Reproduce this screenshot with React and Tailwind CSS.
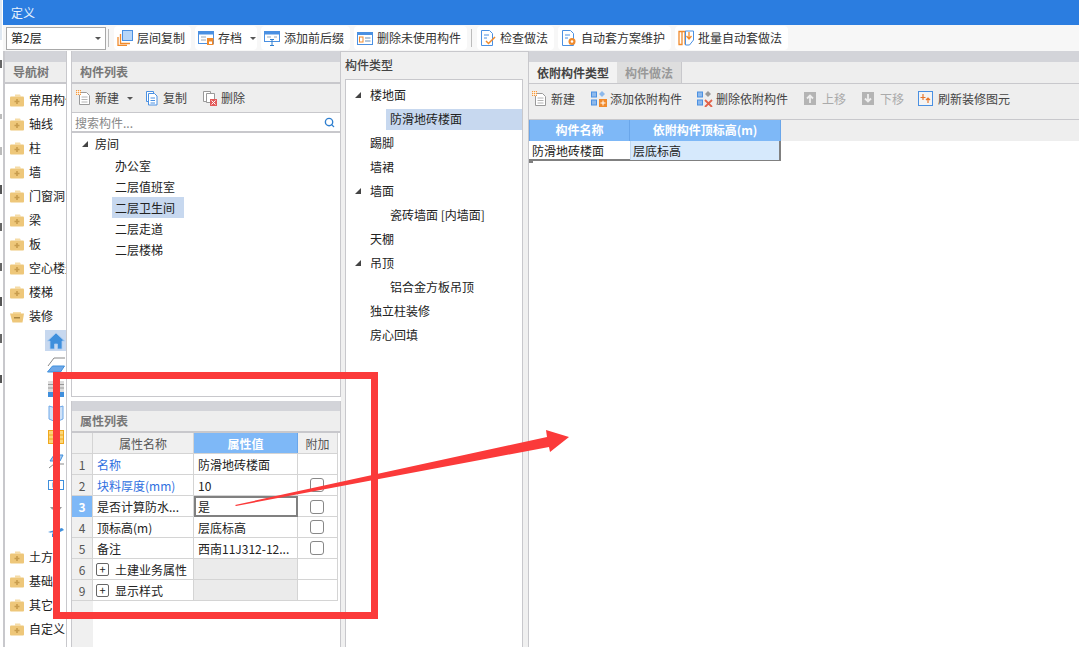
import { Search } from 'lucide-react';

const cjk = { fontFamily: '"Noto Sans CJK SC", "Liberation Sans", sans-serif' };

const Folder = ({ open }) => (
  <svg width="14" height="13" viewBox="0 0 14 13" className="shrink-0">
    {open ? (
      <>
        <path d="M3 2h8v2H3z" fill="#f6dca6" />
        <path d="M0 3.500h14l-1.500 9h-10z" fill="#eec77a" />
        <rect x="4" y="7" width="6" height="1.500" fill="#a88540" />
      </>
    ) : (
      <>
        <path d="M5 0.500h5l1 2H5z" fill="#f6dca6" />
        <rect y="2.500" width="14" height="10" rx="1" fill="#eec77a" />
        <path d="M7 5v5M4.500 7.500h5" stroke="#b98c3c" strokeWidth="1.700" opacity="0.7" />
      </>
    )}
  </svg>
);

const NewIcon = () => (
  <svg width="16" height="16" viewBox="0 0 16 16" className="shrink-0">
    <path d="M3.500 2.500h7l3 3v9h-10z" fill="#fff" stroke="#9a9a9a" />
    <path d="M5.500 7h6M5.500 9.500h6M5.500 12h6" stroke="#b4b4b4" />
    <path d="M0 0h5v5H0z" fill="#f59a3c" />
    <path d="M1.500 0v5M3.500 0v5M0 1.500h5M0 3.500h5" stroke="#fff" strokeWidth="0.700" />
  </svg>
);

const Caret = ({ className = '' }) => (
  <span className={`w-0 h-0 border-x-[3px] border-x-transparent border-t-[3px] border-t-[#555] ${className}`} />
);

const TB = ({ icon, label, caret }) => (
  <div className="flex items-center h-[24px] pl-[3px] pr-[6px] gap-[4px] rounded-sm bg-white text-[#333] whitespace-nowrap">
    {icon}
    <span>{label}</span>
    {caret && <Caret className="ml-[4px] -mr-[5px]" />}
  </div>
);

const Ico = ({ children }) => (
  <svg width="16" height="16" viewBox="0 0 16 16" className="shrink-0">
    {children}
  </svg>
);

const topTools = [
  { label: '层间复制', icon: <Ico><rect x="5.500" y="0.500" width="10" height="10" fill="#b7d6f8" stroke="#4a90e2" /><path d="M3.500 4v9.500H13M1 7v8.500h9" fill="none" stroke="#f08a2c" strokeWidth="1.300" /></Ico> },
  { label: '存档', caret: true, icon: <Ico><rect x="0.500" y="1.500" width="15" height="12" fill="#fff" stroke="#4a90e2" /><rect x="0.500" y="1.500" width="15" height="3" fill="#4a90e2" /><path d="M3 7h5M3 10h5" stroke="#9ab" /><rect x="9" y="8" width="6.500" height="7" fill="#f08a2c" /><rect x="11" y="11.500" width="3" height="2.500" fill="#fff" /></Ico> },
  { label: '添加前后缀', icon: <Ico><rect x="0.500" y="1.500" width="15" height="10" fill="#fff" stroke="#4a90e2" /><rect x="0.500" y="1.500" width="15" height="3" fill="#4a90e2" /><path d="M3 7h4M10 7h3" stroke="#9ab" /><path d="M6 9.500h4M8 9.500v6M6 15.500h4" stroke="#2f7fcf" fill="none" /></Ico> },
  { label: '删除未使用构件', icon: <Ico><rect x="0.500" y="2.500" width="15" height="12" fill="#fff" stroke="#4a90e2" /><rect x="0.500" y="2.500" width="15" height="2.500" fill="#4a90e2" /><rect x="2.500" y="7" width="3.500" height="5" fill="#fff" stroke="#f08a2c" /><path d="M8 8h5.500M8 11h5.500" stroke="#6b8fb5" /></Ico> },
];

const checkTools = [
  { label: '检查做法', icon: <Ico><path d="M1.500 0.500h8l3 3v12h-11z" fill="#fff" stroke="#4a90e2" /><path d="M4 5h5M4 8h3" stroke="#4a90e2" /><path d="M6 11l2.500 2.500L15 7" fill="none" stroke="#f08a2c" strokeWidth="1.500" /></Ico> },
  { label: '自动套方案维护', icon: <Ico><path d="M1.500 0.500h8l3 3v12h-11z" fill="#fff" stroke="#4a90e2" /><path d="M4 5h5M4 8h3" stroke="#4a90e2" /><circle cx="11" cy="11.500" r="3.500" fill="#f08a2c" /><circle cx="11" cy="11.500" r="1.300" fill="#fff" /></Ico> },
  { label: '批量自动套做法', icon: <Ico><path d="M1 1.500h3v13H1zM4 1.500h3v13" fill="#fff" stroke="#f08a2c" strokeWidth="1.300" /><path d="M7.500 1h8v9l-4 5h-4z" fill="#fff" stroke="#4a90e2" /><path d="M11 2v6M8.500 6l2.500 3 2.500-3" fill="none" stroke="#f08a2c" strokeWidth="1.300" /></Ico> },
];

const navTop = ['常用构件', '轴线', '柱', '墙', '门窗洞', '梁', '板', '空心楼盖', '楼梯'];
const navBottom = ['土方', '基础', '其它', '自定义'];

const subIcons = [
  <svg key="a" width="18" height="18" viewBox="0 0 18 18"><path d="M9 1L0.500 9H3v8h4.500v-5h3v5H15V9h2.500z" fill="#3f8fdc" stroke="#a9cbf2" strokeWidth="0.800" /></svg>,
  <svg key="b" width="18" height="18" viewBox="0 0 18 18"><path d="M1 10l6-8h11" fill="none" stroke="#888" /><path d="M0.500 16l5-6h12l-4 6z" fill="#6fa8e8" stroke="#3f8fdc" /></svg>,
  <svg key="c" width="18" height="18" viewBox="0 0 18 18"><rect x="1" y="1" width="16" height="11" fill="#ddd" /><path d="M1 4.500h16M1 8h16" stroke="#999" /><rect x="1" y="12" width="16" height="5" fill="#3f8fdc" /></svg>,
  <svg key="d" width="18" height="18" viewBox="0 0 18 18"><path d="M2 2l7 2 7-2v13l-7 3-7-3z" fill="#cfe2f8" stroke="#6fa8e8" /><path d="M9 4v13" stroke="#6fa8e8" /></svg>,
  <svg key="e" width="18" height="18" viewBox="0 0 18 18"><rect x="1.500" y="2.500" width="15" height="13" fill="#fbd77a" stroke="#f0a81e" /><path d="M1.500 7h15M1.500 11h15M9 2.500v13" stroke="#f0a81e" /></svg>,
  <svg key="f" width="18" height="18" viewBox="0 0 18 18"><path d="M2 16l5-4h10" fill="none" stroke="#888" /><path d="M3 9l4-6h9l-3 6z" fill="#a9cbf2" stroke="#3f8fdc" /></svg>,
  <svg key="g" width="18" height="18" viewBox="0 0 18 18"><rect x="1.500" y="4.500" width="15" height="9" fill="#fff" stroke="#3f8fdc" /><rect x="6" y="7" width="6" height="4" fill="#a9cbf2" stroke="#3f8fdc" /></svg>,
  <svg key="h" width="18" height="18" viewBox="0 0 18 18"><path d="M3 7h12l-2 2.500H5z" fill="#999" /><path d="M8 9h2v2H8z" fill="#bbb" /></svg>,
  <svg key="i" width="18" height="18" viewBox="0 0 18 18"><path d="M1 8l14-4 2 2-4 2v5H5V9z" fill="#3f8fdc" /><path d="M4 9h9" stroke="#fff" /></svg>,
];

const Tri = () => (
  <svg width="6" height="6" viewBox="0 0 6 6" className="shrink-0"><path d="M0 6L6 0v6z" fill="#444" /></svg>
);

const typeRows = [
  { label: '楼地面', tri: true },
  { label: '防滑地砖楼面', child: true, selected: true },
  { label: '踢脚' },
  { label: '墙裙' },
  { label: '墙面', tri: true },
  { label: '瓷砖墙面 [内墙面]', child: true },
  { label: '天棚' },
  { label: '吊顶', tri: true },
  { label: '铝合金方板吊顶', child: true },
  { label: '独立柱装修' },
  { label: '房心回填' },
];

const attrRows = [
  { n: 1, name: '名称', value: '防滑地砖楼面', blue: true },
  { n: 2, name: '块料厚度(mm)', value: '10', blue: true, check: true },
  { n: 3, name: '是否计算防水...', value: '是', check: true, active: true },
  { n: 4, name: '顶标高(m)', value: '层底标高', check: true },
  { n: 5, name: '备注', value: '西南11J312-12...', check: true },
  { n: 6, name: '土建业务属性', group: true },
  { n: 9, name: '显示样式', group: true },
];

// slivers of the window behind, seen along the left edge
const slivers = [
  { top: 0, h: 40, c: 'bg-[#dfe8f2]' },
  { top: 20, h: 8, c: 'bg-[#666]' },
  { top: 46, h: 5, c: 'bg-[#bbb]' },
  { top: 28, h: 8, c: 'bg-[#bbb]' },
  { top: 30, h: 9, c: 'bg-[#555]' },
  { top: 29, h: 8, c: 'bg-[#666]' },
  { top: 32, h: 8, c: 'bg-[#666]' },
  { top: 26, h: 9, c: 'bg-[#555]' },
  { top: 28, h: 9, c: 'bg-[#666]' },
  { top: 32, h: 8, c: 'bg-[#555]' },
];

const PanelTitle = ({ children, pl = 'pl-[8px]' }) => (
  <div className={`h-[22px] bg-[#eeeeee] border-b-2 border-[#c8c8cc] ${pl} flex items-center font-bold text-[#777]`}>{children}</div>
);

const MiniTool = ({ icon, label, muted, className = '' }) => (
  <div className={`flex items-center gap-[3px] whitespace-nowrap ${muted ? 'text-[#aaa]' : 'text-[#444]'} ${className}`}>
    {icon}
    <span>{label}</span>
  </div>
);

const cellLine = 'border-r border-[#d4d4d4]';

export default function App() {
  return (
    <div className="relative w-[1079px] h-[647px] overflow-hidden bg-white text-[12px] text-[#222]" style={cjk}>
      <div className="flex h-full">
        <div className="w-[3px] shrink-0 flex flex-col">
          {slivers.map((s, i) => (
            <div key={i} className={`w-[2px] ${s.c}`} style={{ marginTop: s.top, height: s.h }} />
          ))}
        </div>

        <div className="flex-1 flex flex-col min-w-0">
          <div className="h-[25px] shrink-0 bg-[#2b7de0] text-[#e8f2fd] flex items-center pl-[8px]">定义</div>

          {/* Toolbar */}
          <div className="h-[26px] shrink-0 bg-[#f7f7f7] flex items-center pl-[3px]">
            <div className="w-[100px] h-[23px] shrink-0 bg-white border border-[#a8a8a8] flex items-center justify-between pl-[4px] pr-[4px]">
              <span>第2层</span>
              <Caret />
            </div>
            <div className="w-px h-[18px] bg-[#bbb] ml-[2px] mr-[5px]" />
            <div className="flex items-center gap-[4px]">
              {topTools.map((t) => <TB key={t.label} {...t} />)}
            </div>
            <div className="w-px h-[18px] bg-[#bbb] ml-[4px] mr-[5px]" />
            <div className="flex items-center gap-[4px]">
              {checkTools.map((t) => <TB key={t.label} {...t} />)}
            </div>
          </div>

          <div className="flex-1 flex min-h-0">
            {/* Nav tree */}
            <div className="w-[64px] shrink-0 flex flex-col border-l-2 border-r border-[#c8c8cc] overflow-hidden">
              <div className="h-[11px] shrink-0 bg-[#d3d4d9]" />
              <PanelTitle>导航树</PanelTitle>
              <div className="pt-[4px] pl-[5px]">
                {navTop.map((n) => (
                  <div key={n} className="h-[24px] flex items-center gap-[5px] whitespace-nowrap"><Folder /><span>{n}</span></div>
                ))}
                <div className="h-[24px] flex items-center gap-[5px]"><Folder open /><span>装修</span></div>
                <div className="ml-[35px] pt-[2px] mb-[-1px]">
                  {subIcons.map((icon, i) => (
                    <div key={i} className="h-[24px] w-[21px]">
                      <div className={`h-[21px] flex items-center justify-center ${i === 0 ? 'bg-[#c7d8ef]' : ''}`}>{icon}</div>
                    </div>
                  ))}
                </div>
                {navBottom.map((n) => (
                  <div key={n} className="h-[24px] flex items-center gap-[5px] whitespace-nowrap"><Folder /><span>{n}</span></div>
                ))}
              </div>
            </div>

            <div className="w-[4px] shrink-0" />

            {/* Component list + attributes */}
            <div className="w-[270px] shrink-0 flex flex-col">
              <div className="h-[346px] shrink-0 flex flex-col border-x border-b border-[#c8c8cc]">
                <div className="h-[11px] shrink-0 bg-[#d3d4d9]" />
                <PanelTitle>构件列表</PanelTitle>
                <div className="h-[29px] shrink-0 bg-[#eeeeee] border-b border-[#c8c8cc] flex items-center pl-[4px]">
                  <MiniTool icon={<NewIcon />} label="新建" />
                  <Caret className="ml-[8px]" />
                  <MiniTool className="ml-[11px]" label="复制" icon={<Ico><path d="M2.500 1.500h7v10h-7z" fill="#fff" stroke="#4a90e2" /><path d="M4.500 3.500h6l2.500 2.500v9H4.500z" fill="#fff" stroke="#4a90e2" /><path d="M6.500 8h4.500M6.500 10.500h4.500M6.500 13h4.500" stroke="#4a90e2" /></Ico>} />
                  <MiniTool className="ml-[15px]" label="删除" icon={<Ico><path d="M1.500 1.500h7v10h-7z" fill="#fff" stroke="#999" /><path d="M4.500 3.500h8v9h-8z" fill="#fff" stroke="#999" /><rect x="8" y="9" width="7" height="7" fill="#e25b5b" /><path d="M9.500 10.500l4 4M13.500 10.500l-4 4" stroke="#fff" /></Ico>} />
                </div>
                <div className="h-[20px] shrink-0 border-b-2 border-[#c8c8cc] flex items-center justify-between pl-[3px] pr-[5px] pt-px text-[#888]">
                  <span>搜索构件...</span>
                  <Search size={11} strokeWidth={3} className="text-[#2f7fcf]" />
                </div>
                <div>
                  <div className="h-[22px] flex items-center pl-[10px] gap-[7px]"><Tri /><span>房间</span></div>
                  {['办公室', '二层值班室', '二层卫生间', '二层走道', '二层楼梯'].map((n) => (
                    <div key={n} className="h-[21px] pl-[40px] flex items-center">
                      <span className={`h-[21px] w-[72px] flex items-center pl-[3px] ${n === '二层卫生间' ? 'bg-[#c7d8ef]' : ''}`}>{n}</span>
                    </div>
                  ))}
                </div>
              </div>

              <div className="h-[4px] shrink-0" />

              <div className="flex-1 flex flex-col border-x border-[#c8c8cc]">
                <div className="h-[10px] shrink-0 bg-[#d3d4d9]" />
                <PanelTitle>属性列表</PanelTitle>
                <div className="flex-1 flex flex-col">
                  <div className="grid grid-cols-[21px_101px_104px_40px] w-[266px] h-[21px] border-b border-[#d4d4d4]">
                    <div className={`bg-[#f0f0f0] ${cellLine}`} />
                    <div className={`bg-[#f0f0f0] ${cellLine} flex items-center justify-center pt-px text-[#555]`}>属性名称</div>
                    <div className="bg-[#7eb8f7] border-r border-[#6aa6ea] flex items-center justify-center pt-px font-bold text-white">属性值</div>
                    <div className={`bg-[#f0f0f0] ${cellLine} flex items-center justify-center pt-px text-[#555]`}>附加</div>
                  </div>
                  {attrRows.map((r) => (
                    <div key={r.n} className="grid grid-cols-[21px_101px_104px_40px] w-[266px] h-[21px] border-b border-[#d4d4d4]">
                      <div className={`${cellLine} flex items-center justify-center pt-px ${r.active ? 'bg-[#7eb8f7] text-white font-bold' : 'bg-[#f0f0f0] text-[#555]'}`}>{r.n}</div>
                      <div className={`${cellLine} flex items-center pl-[4px] pt-px whitespace-nowrap ${r.blue ? 'text-[#2f6fe0]' : ''}`}>
                        {r.group && <span className="w-[13px] h-[13px] -ml-px mr-[6px] border border-[#666] rounded-[2px] flex items-center justify-center text-[11px] leading-none">+</span>}
                        {r.name}
                      </div>
                      <div className={`flex items-center whitespace-nowrap ${r.group ? 'bg-[#ebebeb]' : ''} ${r.active ? 'border-2 border-[#808080] pl-[2px] h-[21px]' : `${cellLine} pl-[4px] pt-px`}`}>{r.value}</div>
                      <div className={`${cellLine} flex items-center justify-center pr-[2px]`}>
                        {r.check && <span className="w-[14px] h-[14px] bg-white border border-[#888] rounded-[3px]" />}
                      </div>
                    </div>
                  ))}
                  <div className="flex-1 w-[21px] bg-[#f0f0f0]" />
                </div>
              </div>
            </div>

            {/* Component types */}
            <div className="w-[187px] shrink-0 flex flex-col border-t border-[#c8c8cc] bg-[#f0f0f0] pl-[4px] pr-[5px]">
              <div className="h-[27px] shrink-0 flex items-center pb-px font-medium text-[#444]">构件类型</div>
              <div className="flex-1 bg-white border-x border-t border-[#c8c8cc] pt-[3px]">
                {typeRows.map((r) => (
                  <div key={r.label} className={`h-[24px] flex items-center ${r.child ? 'pl-[40px]' : 'pl-[9px]'}`}>
                    {r.child ? (
                      <span className={`h-[21px] flex-1 flex items-center pl-[4px] whitespace-pre ${r.selected ? 'bg-[#c7d8ef]' : ''}`}>{r.label}</span>
                    ) : (
                      <>
                        <span className="w-[15px] shrink-0 flex">{r.tri && <Tri />}</span>
                        <span>{r.label}</span>
                      </>
                    )}
                  </div>
                ))}
              </div>
            </div>

            {/* Dependent components */}
            <div className="flex-1 flex flex-col border-l border-[#c8c8cc] min-w-0">
              <div className="h-[11px] shrink-0 bg-[#d3d4d9]" />
              <div className="h-[22px] shrink-0 bg-[#eeeeee] flex items-stretch border-b border-[#c8c8cc]">
                <div className="w-[88px] bg-[#f2f2f2] flex items-center justify-center font-bold text-[#444]">依附构件类型</div>
                <div className="w-[65px] bg-[#dedede] border-r border-[#c8c8cc] flex items-center justify-center font-bold text-[#999]">构件做法</div>
              </div>
              <div className="h-[36px] shrink-0 bg-[#eeeeee] border-b border-[#c8c8cc] pl-[3px]">
                <div className="h-[29px] flex items-center">
                  <MiniTool icon={<NewIcon />} label="新建" />
                  <MiniTool className="ml-[16px]" label="添加依附构件" icon={<Ico><rect x="0.500" y="1" width="5" height="5" fill="#8db9ec" stroke="#4a90e2" /><rect x="0.500" y="9" width="5" height="5" fill="#8db9ec" stroke="#4a90e2" /><path d="M11 0l3 3-3 3-3-3z" fill="#8db9ec" /><rect x="8" y="8" width="8" height="8" fill="#f08a2c" /><path d="M12 9.500v5M9.500 12h5" stroke="#fff" /></Ico>} />
                  <MiniTool className="ml-[15px]" label="删除依附构件" icon={<Ico><rect x="0.500" y="1" width="5" height="5" fill="#8db9ec" stroke="#4a90e2" /><rect x="0.500" y="9" width="5" height="5" fill="#8db9ec" stroke="#4a90e2" /><path d="M11 0l3 3-3 3-3-3z" fill="#999" /><path d="M8 9l7 7M15 9l-7 7" stroke="#e2634b" strokeWidth="1.800" /></Ico>} />
                  <MiniTool muted className="ml-[16px]" label="上移" icon={<svg width="15" height="16" viewBox="0 0 15 16" className="shrink-0"><rect y="1" width="12" height="13" fill="#b4b4b4" /><path d="M6 12V5M3 7.500L6 4.500l3 3" fill="none" stroke="#eee" strokeWidth="1.800" /></svg>} />
                  <MiniTool muted className="ml-[16px]" label="下移" icon={<svg width="15" height="16" viewBox="0 0 15 16" className="shrink-0"><rect y="1" width="12" height="13" fill="#b4b4b4" /><path d="M6 3v7M3 7.500l3 3 3-3" fill="none" stroke="#eee" strokeWidth="1.800" /></svg>} />
                  <MiniTool className="ml-[14px]" label="刷新装修图元" icon={<svg width="17" height="16" viewBox="0 0 17 16" className="shrink-0"><rect x="0.500" y="0.500" width="14" height="14" fill="#f4f4f4" stroke="#4a90e2" /><path d="M5 3v6M2.500 6.500h5M10 7v5M8 9l2-2 2 2" fill="none" stroke="#e8762b" strokeWidth="1.200" /></svg>} />
                </div>
              </div>
              <div className="bg-[#eeeeee] h-[21px] shrink-0">
                <div className="w-[252px] h-full grid grid-cols-[101px_151px] bg-[#7eb8f7] font-bold text-white">
                  <div className="border-x border-[#6aa6ea] flex items-center justify-center pb-px">构件名称</div>
                  <div className="border-r border-[#6aa6ea] flex items-center justify-center pb-px">依附构件顶标高(m)</div>
                </div>
              </div>
              <div className="relative w-[252px] h-[20px] grid grid-cols-[101px_151px] border-b-2 border-[#808080]">
                <div className="flex items-center pl-[3px] pt-px">防滑地砖楼面</div>
                <div className="bg-[#d6e9fc] border-l border-[#c0d8f0] border-r-2 border-r-[#808080] flex items-center pl-[2px] pt-px">层底标高</div>
                <span className="absolute left-0 -bottom-[4px] w-[4px] h-[4px] bg-[#808080]" />
              </div>
            </div>
          </div>
        </div>
      </div>

      {/* red annotation */}
      <div className="absolute left-[53px] top-[372px] w-[325px] h-[247px] border-[7px] border-[#fb3a3a]" />
      <svg className="absolute inset-0 pointer-events-none" width="1079" height="647" viewBox="0 0 1079 647">
        <polygon points="235,505 547,437 546,430 569,437 550,452 549,447 480,460 236,506" fill="#fb3a3a" />
      </svg>
    </div>
  );
}
